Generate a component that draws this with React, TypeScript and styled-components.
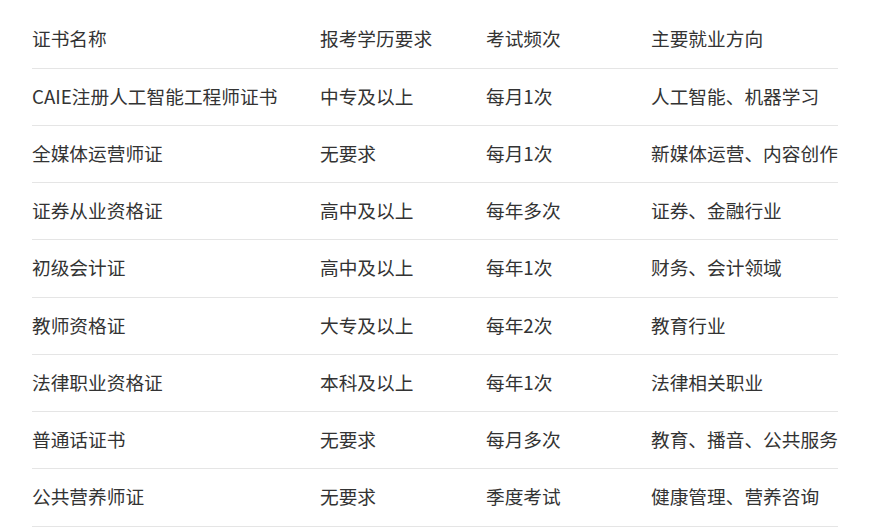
import styled, { createGlobalStyle } from "styled-components";

const GlobalStyle = createGlobalStyle`
  html, body {
    margin: 0;
    padding: 0;
    background: #ffffff;
  }
  body {
    font-family: "Noto Sans CJK SC", "Noto Sans", sans-serif;
    color: #333333;
  }
`;

const rows = [
  ["CAIE注册人工智能工程师证书", "中专及以上", "每月1次", "人工智能、机器学习"],
  ["全媒体运营师证", "无要求", "每月1次", "新媒体运营、内容创作"],
  ["证券从业资格证", "高中及以上", "每年多次", "证券、金融行业"],
  ["初级会计证", "高中及以上", "每年1次", "财务、会计领域"],
  ["教师资格证", "大专及以上", "每年2次", "教育行业"],
  ["法律职业资格证", "本科及以上", "每年1次", "法律相关职业"],
  ["普通话证书", "无要求", "每月多次", "教育、播音、公共服务"],
  ["公共营养师证", "无要求", "季度考试", "健康管理、营养咨询"],
];

const head = ["证书名称", "报考学历要求", "考试频次", "主要就业方向"];

export default function App() {
  return (
    <>
      <GlobalStyle />
      <Wrapper>
        <Table>
          <thead>
            <tr>
              {head.map((h) => (
                <HeadCell key={h}>{h}</HeadCell>
              ))}
            </tr>
          </thead>
          <tbody>
            {rows.map((r) => (
              <tr key={r[0]}>
                {r.map((c, i) => (
                  <Cell key={i}>{c}</Cell>
                ))}
              </tr>
            ))}
          </tbody>
        </Table>
      </Wrapper>
    </>
  );
}

const Wrapper = styled.div`
  padding: 11px 0 0 32px;
`;

const Table = styled.table`
  width: 806px;
  border-collapse: collapse;
  table-layout: fixed;

  th:nth-child(1) {
    width: 288px;
  }
  th:nth-child(2) {
    width: 166px;
  }
  th:nth-child(3) {
    width: 165px;
  }
`;

const HeadCell = styled.th`
  height: 57px;
  padding: 0 0 4px;
  box-sizing: border-box;
  text-align: left;
  font-weight: 400;
  font-size: 18.7px;
  color: #333333;
  border-bottom: 1px solid #e5e5e5;
  white-space: nowrap;
`;

const Cell = styled.td`
  height: 57.25px;
  padding: 0 0 3px;
  box-sizing: border-box;
  font-size: 18.7px;
  color: #333333;
  border-bottom: 1px solid #e5e5e5;
  white-space: nowrap;
`;
